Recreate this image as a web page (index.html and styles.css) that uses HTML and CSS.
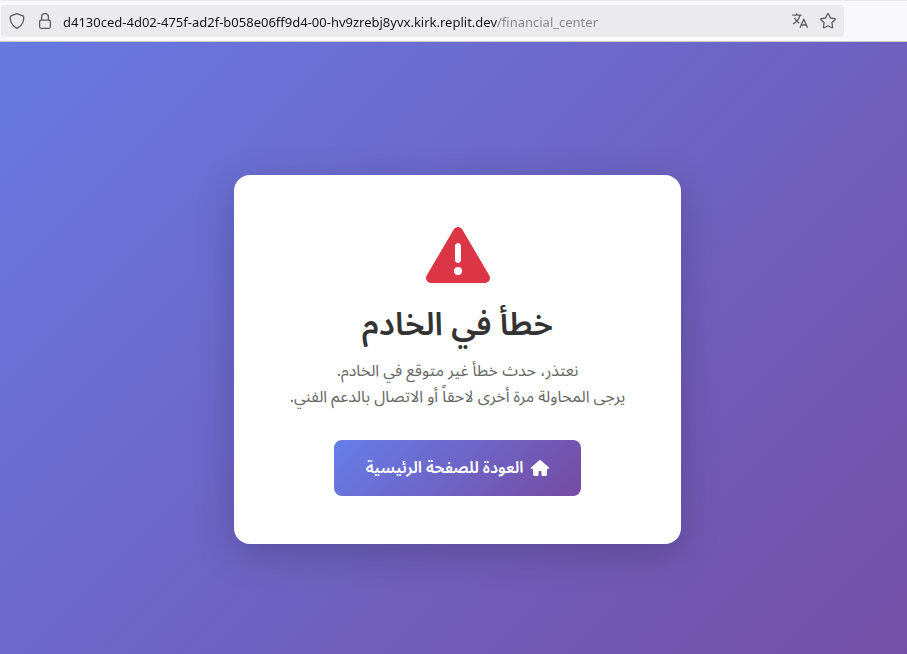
FILE: index.html
```html
<!DOCTYPE html>
<html lang="ar" dir="rtl">
<head>
<meta charset="utf-8">
<meta name="viewport" content="width=device-width, initial-scale=1">
<title>خطأ في الخادم</title>
<link rel="stylesheet" href="styles.css">
</head>
<body>
<header class="toolbar" dir="ltr">
  <div class="urlbar">
    <div class="tools">
      <button class="tool" type="button" aria-label="Tracking protection">
        <svg viewBox="0 0 16 16"><path d="M8 .7 14.6 3.2C15.2 8.6 12.9 13 8 15.3 3.1 13 .8 8.6 1.4 3.2Z"/></svg>
      </button>
      <button class="tool" type="button" aria-label="Connection security">
        <svg viewBox="0 0 16 16"><rect x="2.6" y="7.1" width="10.8" height="8.2" rx="1.5"/><path d="M4.6 7V4a3.4 3.4 0 0 1 6.8 0v3"/></svg>
      </button>
    </div>
    <input class="address" type="text" aria-label="Address" spellcheck="false" value="d4130ced-4d02-475f-ad2f-b058e06ff9d4-00-hv9zrebj8yvx.kirk.replit.dev/financial_center">
    <div class="tools">
      <button class="tool" type="button" aria-label="Translate page">
        <svg viewBox="0 0 16 16"><path d="M.2 2.2H9.6M4.8.2V2.2M8 2.4C7.2 6 4.8 8.800 1 11M2.300 4.800C3.500 7.200 5 8.900 7.200 10.200M8 14.800 11.800 6.200 15.600 14.800M9.300 12H14.300"/></svg>
      </button>
      <button class="tool" type="button" aria-label="Bookmark page">
        <svg viewBox="0 0 16 16"><path d="M7.4 1.1Q8 .2 8.6 1.1L10.4 5 14.7 5.6Q15.7 5.9 15 6.7L11.9 9.7 12.6 14Q12.6 15 11.7 14.7L8 12.7 4.3 14.7Q3.4 15 3.4 14L4.1 9.7 1 6.7Q.3 5.9 1.3 5.6L5.6 5Z"/></svg>
      </button>
    </div>
  </div>
</header>
<main class="page">
  <section class="card">
    <svg class="warning" viewBox="0 0 512 512" aria-hidden="true"><path d="M256 32c14.200 0 27.300 7.500 34.500 19.800l216 368c7.300 12.400 7.300 27.700.2 40.100S486.300 480 472 480H40c-14.300 0-27.600-7.700-34.700-20.100s-7-27.800.2-40.100l216-368C228.700 39.500 241.800 32 256 32zm0 128c-13.300 0-24 10.700-24 24v112c0 13.300 10.700 24 24 24s24-10.700 24-24V184c0-13.300-10.700-24-24-24zm32 224a32 32 0 1 0-64 0 32 32 0 1 0 64 0z"/></svg>
    <h1 class="title">خطأ في الخادم</h1>
    <p class="message">نعتذر، حدث خطأ غير متوقع في الخادم.<br>يرجى المحاولة مرة أخرى لاحقاً أو الاتصال بالدعم الفني.</p>
    <a class="home" href="/">
      <svg class="home-icon" viewBox="0 0 576 512" aria-hidden="true"><path d="M575.800 255.500c0 18-15 32.100-32 32.100h-32l.7 160.200c0 35-24 64.200-56 64.200H376c-22 0-40-17.900-40-40v-88c0-17.700-14.300-32-32-32h-32c-17.700 0-32 14.300-32 32v88c0 22.100-18 40-40 40h-80c-32 0-56-29-56-64V287.600H32c-18 0-32-14-32-32.100 0-9 3-17 10-24L266.400 8c7-7 15-8 22-8s15 2 21 7l255.400 224.500c8 7 12 15 11 24z"/></svg>
      <span>العودة للصفحة الرئيسية</span>
    </a>
  </section>
</main>
</body>
</html>
```
FILE: styles.css
```css
* {
  box-sizing: border-box;
}

body {
  margin: 0;
  min-height: 100vh;
  display: flex;
  flex-direction: column;
  font-family: "Segoe UI", "Noto Sans", "Noto Sans Arabic", "DejaVu Sans", sans-serif;
}

.toolbar {
  height: 42px;
  padding: 4px 63px 4px 1px;
  background: #f9f9fb;
  border-top: 1px solid #e9e9ec;
  border-bottom: 1px solid #cccccf;
}

.urlbar {
  height: 32px;
  padding: 0 8px;
  display: flex;
  align-items: center;
  gap: 10px;
  background: #ebebed;
  border-radius: 4px;
}

.tools {
  display: flex;
  gap: 12px;
}

.tool {
  display: flex;
  padding: 0;
  border: 0;
  background: none;
}

.tool svg {
  width: 16px;
  height: 16px;
  fill: none;
  stroke: #5b5b63;
  stroke-width: 1.3;
  stroke-linejoin: round;
}

.address {
  flex: 1;
  min-width: 0;
  height: 32px;
  padding: 2px 0 0;
  border: 0;
  outline: 0;
  font: 13px "Segoe UI", "Noto Sans", sans-serif;
  color: transparent;
  background: linear-gradient(to right, #15141a 434px, #858589 434px);
  background-clip: text;
}

.page {
  flex: 1;
  display: flex;
  align-items: center;
  justify-content: center;
  padding: 22px 16px 0 24px;
  background: linear-gradient(135deg, #6779e2 0%, #754fa7 100%);
}

.card {
  padding: 48px 56px;
  display: flex;
  flex-direction: column;
  align-items: center;
  text-align: center;
  background: #fff;
  border-radius: 16px;
  box-shadow: 0 10px 40px rgba(0, 0, 0, 0.2);
}

.warning {
  width: 64px;
  height: 64px;
  fill: #dc3545;
}

.title {
  margin: 16px 0 14px;
  font-size: 32px;
  line-height: 40px;
  font-weight: 600;
  color: #333;
}

.message {
  margin: 0 0 31px;
  font-size: 16px;
  line-height: 26px;
  color: #666;
}

.home {
  height: 56px;
  padding: 0 32px;
  display: flex;
  align-items: center;
  gap: 8px;
  font-size: 16px;
  font-weight: 600;
  color: #fff;
  text-decoration: none;
  background: linear-gradient(135deg, #667eea 0%, #764ba2 100%);
  border-radius: 8px;
}

.home-icon {
  width: 18px;
  height: 16px;
  fill: #fff;
}
```
